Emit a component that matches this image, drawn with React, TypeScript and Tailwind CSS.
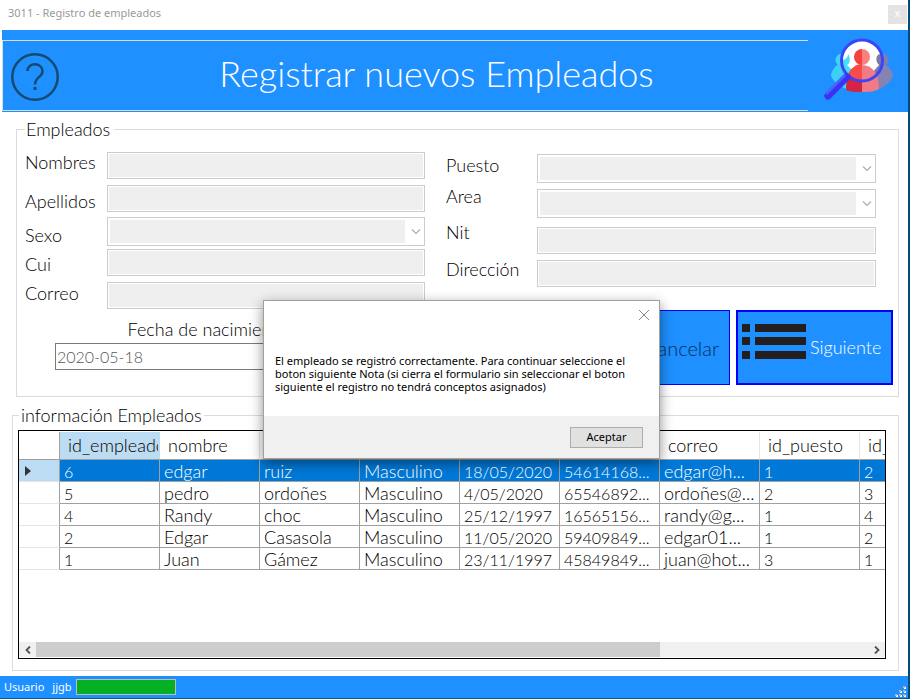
import type { ReactNode } from 'react';

const columns = ['id_empleado', 'nombre', 'apellido', 'sexo', 'fecha_nac', 'cui', 'correo', 'id_puesto', 'id_area'];

const rows = [
  ['6', 'edgar', 'ruiz', 'Masculino', '18/05/2020', '54614168...', 'edgar@h...', '1', '2'],
  ['5', 'pedro', 'ordoñes', 'Masculino', '4/05/2020', '65546892...', 'ordoñes@...', '2', '3'],
  ['4', 'Randy', 'choc', 'Masculino', '25/12/1997', '16565156...', 'randy@g...', '1', '4'],
  ['2', 'Edgar', 'Casasola', 'Masculino', '11/05/2020', '59409849...', 'edgar01...', '1', '2'],
  ['1', 'Juan', 'Gámez', 'Masculino', '23/11/1997', '45849849...', 'juan@hot...', '3', '1'],
];

function TextField({ id }: { id: string }) {
  return (
    <div className="flex h-[27px] border border-[#cccccc] bg-white p-px">
      <input id={id} type="text" disabled className="min-w-0 flex-1 bg-[#efefef] px-1" />
    </div>
  );
}

function SelectField({ id }: { id: string }) {
  return (
    <div className="flex h-[29px] border border-[#cccccc] bg-white p-0.5">
      <select id={id} disabled className="min-w-0 flex-1 appearance-none bg-[#efefef] opacity-100">
        <option></option>
      </select>
      <svg viewBox="0 0 17 23" className="h-[23px] w-[17px] shrink-0" fill="none" stroke="#adadad" strokeWidth="1.2">
        <path d="M7 9.500 L11 13.500 L15 9.500" />
      </svg>
    </div>
  );
}

function Label({ htmlFor, className, children }: { htmlFor: string; className?: string; children: ReactNode }) {
  return (
    <label htmlFor={htmlFor} className={`block leading-5 ${className ?? ''}`}>
      {children}
    </label>
  );
}

function PeopleSearchIcon() {
  return (
    <svg viewBox="0 0 70 64" className="mt-2 mr-3.5 h-16 w-[70px] shrink-0">
      <circle cx="18" cy="22" r="6.500" fill="#3dd5f5" />
      <path d="M13 27 C9 31 7 34 7 38 C10 44 15 48 22 51 L32 51 L32 27 Z" fill="#3dcff5" />
      <circle cx="58" cy="22" r="6.500" fill="#7d7fb4" />
      <path d="M62 27 C67 31 69 34 69 38 C66 45 60 50 53 51 L44 51 L46 27 Z" fill="#8583b3" />
      <circle cx="38" cy="22.500" r="20" fill="#ffffff" />
      <path d="M18 22 C20 22 24 20 24 16 C27 20 26 26 23 27 L31 35 L26 41 C21 36 18 30 18 22 Z" fill="#45e0f8" />
      <path d="M55 16 C51 19 52 24 55 27 L48 35 L52 38 C56 33 59 25 57 17 Z" fill="#7b7ba6" />
      <path d="M38 27 C28 27 22 34 22 52 C27 54 32 54 38 54 Z" fill="#d42442" />
      <path d="M38 27 C48 27 55 35 55 51 C49 54 44 54 38 54 Z" fill="#f37a84" />
      <path d="M38 11 a8 8 0 0 0 0 16 Z" fill="#f6423f" />
      <path d="M38 11 a8 8 0 0 1 0 16 Z" fill="#fa8080" />
      <path d="M38 26 C31 26 27 31 25 36 C28 40 33 42 38 42 Z" fill="#fa4b48" />
      <circle cx="38" cy="22.500" r="20.500" fill="none" stroke="#3c44f6" strokeWidth="3" />
      <path d="M23 39 L4 58" stroke="#3a31f2" strokeWidth="7" strokeLinecap="round" />
      <path d="M21 37 L2 56" stroke="#4862ff" strokeWidth="3" />
    </svg>
  );
}

function ListIcon() {
  return (
    <svg viewBox="0 0 64 36" className="h-9 w-16 shrink-0" fill="#231f20">
      {[0, 13, 27].map((y) => (
        <g key={y}>
          <rect x="0" y={y} width="8" height="8" />
          <rect x="13" y={y} width="51" height="8" />
        </g>
      ))}
    </svg>
  );
}

function MessageDialog() {
  return (
    <div
      role="dialog"
      aria-label="Mensaje"
      className="absolute top-[300px] left-[263px] flex h-[159px] w-[397px] flex-col border border-[#a0a0a0] bg-white font-['Noto_Sans',sans-serif] text-[11px] font-normal shadow-[0_4px_12px_rgba(0,0,0,0.45)]"
    >
      <button type="button" aria-label="Cerrar" className="mt-2 mr-[9px] flex h-3 w-3 shrink-0 self-end">
        <svg viewBox="0 0 12 12" className="h-3 w-3" stroke="#8a8a8a" strokeWidth="1">
          <path d="M1 1 L11 11 M11 1 L1 11" />
        </svg>
      </button>
      <p className="mt-[33px] pl-[11px] leading-[13px] whitespace-nowrap text-black">
        El empleado se registró correctamente. Para continuar seleccione el
        <br />
        boton siguiente Nota (si cierra el formulario sin seleccionar el boton
        <br />
        siguiente el registro no tendrá conceptos asignados)
      </p>
      <div className="mt-auto flex h-[42px] items-center justify-end bg-[#f0f0f0] pr-4">
        <button type="button" className="h-[21px] w-[73px] border border-[#adadad] bg-[#e1e1e1] pb-0.5 leading-none">
          Aceptar
        </button>
      </div>
    </div>
  );
}

export default function App() {
  return (
    <main className="relative min-h-screen border-r-2 border-[#004a73] bg-white font-[Lato,sans-serif] text-lg font-light text-black">
      <div className="flex h-[30px] items-start justify-between pl-2 font-['Noto_Sans',sans-serif] text-[11px] font-normal">
        <h1 className="pt-1 leading-[18px] text-[#999999]">3011 - Registro de empleados</h1>
        <button type="button" className="mt-[5px] mr-px h-[19px] w-[19px] bg-[#e3e3e3] pb-1 leading-none text-white">
          x
        </button>
      </div>

      <header className="ml-0.5 flex h-[82px] justify-between bg-[#1e90ff]">
        <div className="mt-2.5 mr-4 flex h-[71px] flex-1 items-center border-y border-l border-[#dcdcdc] pl-2">
          <svg viewBox="0 0 48 48" className="mt-0.5 h-12 w-12 shrink-0" fill="none" stroke="#144a70" strokeWidth="2.500">
            <circle cx="24" cy="24" r="22.700" />
            <path d="M16.500 18 C16.500 9 31.500 9 31.500 18.500 C31.500 24 24 24 24 31.500" />
            <path d="M24 34 V37" strokeWidth="3" />
          </svg>
          <h2 className="flex-1 pb-1.5 pl-1.5 text-center text-4xl text-white">Registrar nuevos Empleados</h2>
        </div>
        <PeopleSearchIcon />
      </header>

      <form>
        <fieldset className="mt-[7px] mr-[9px] ml-4 min-w-0 border border-[#dcdcdc] pr-[5px] pb-[11px] pl-2">
          <legend className="pr-1 pl-px leading-5">Empleados</legend>
          <div className="grid grid-cols-[400fr_430fr] gap-x-[21px] pt-[13px] pr-[17px]">
            <div className="grid grid-cols-[82px_1fr]">
              <div>
                <Label htmlFor="nombres">Nombres</Label>
                <Label htmlFor="apellidos" className="mt-[19px]">Apellidos</Label>
                <Label htmlFor="sexo" className="mt-3.5">Sexo</Label>
                <Label htmlFor="cui" className="mt-[9px]">Cui</Label>
                <Label htmlFor="correo" className="mt-[9px]">Correo</Label>
              </div>
              <div>
                <TextField id="nombres" />
                <div className="mt-1.5"><TextField id="apellidos" /></div>
                <div className="mt-[5px]"><SelectField id="sexo" /></div>
                <div className="mt-[3px]"><TextField id="cui" /></div>
                <div className="mt-1.5"><TextField id="correo" /></div>
              </div>
            </div>
            <div className="grid grid-cols-[91px_1fr] content-start">
              <div className="pt-[3px]">
                <Label htmlFor="puesto">Puesto</Label>
                <Label htmlFor="area" className="mt-[11px]">Area</Label>
                <Label htmlFor="nit" className="mt-4">Nit</Label>
                <Label htmlFor="direccion" className="mt-[17px]">Dirección</Label>
              </div>
              <div className="pt-0.5">
                <SelectField id="puesto" />
                <div className="mt-1.5"><SelectField id="area" /></div>
                <div className="mt-[9px]"><TextField id="nit" /></div>
                <div className="mt-1.5"><TextField id="direccion" /></div>
              </div>
            </div>
          </div>
          <div className="mt-px flex items-start justify-between">
            <div className="ml-[30px] w-[305px] pt-[9px]">
              <Label htmlFor="fecha" className="text-center">Fecha de nacimiento</Label>
              <input
                id="fecha"
                type="text"
                defaultValue="2020-05-18"
                className="mt-1 block h-[27px] w-full border border-[#7a7a7a] bg-white px-px text-base text-[#555555]"
              />
            </div>
            <div className="flex gap-1.5">
              <button type="button" disabled className="h-[75px] w-[157px] border border-[#0000ff] bg-[#1e90ff] pr-2.5 text-right text-xl text-[#062f5c]">
                Cancelar
              </button>
              <button type="button" className="flex h-[75px] w-[157px] items-center border-2 border-[#0000ff] bg-[#1e90ff] pl-1 text-white">
                <span className="pb-3"><ListIcon /></span>
                <span className="pb-0.5 pl-1">Siguiente</span>
              </button>
            </div>
          </div>
        </fieldset>
      </form>

      <fieldset className="mt-2 mr-[9px] ml-3 min-w-0 border border-[#dcdcdc] pr-3 pb-[11px] pl-[5px]">
        <legend className="ml-px px-0.5 leading-5">información Empleados</legend>
        <div className="mt-[5px] flex h-[229px] flex-col border border-black">
          <div className="min-h-0 flex-1 overflow-hidden pt-px">
            <table className="w-[941px] table-fixed border-separate border-spacing-0 leading-5">
              <thead>
                <tr className="h-7">
                  <th className="w-[41px] border-r border-b border-[#a0a0a0] p-0" aria-label="Fila" />
                  {columns.map((name, i) => (
                    <th
                      key={name}
                      className={`w-[100px] border-b border-[#a0a0a0] p-0 font-light ${i === 0 ? 'bg-[#bcdcf4]' : 'border-r border-r-[#e5e5e5]'}`}
                    >
                      <div className="mr-0.5 overflow-hidden pb-0.5 pl-2 text-left whitespace-nowrap">{name}</div>
                    </th>
                  ))}
                </tr>
              </thead>
              <tbody>
                {rows.map((row, r) => (
                  <tr key={row[0]} className={`h-[22px] ${r === 0 ? 'bg-[#0078d7] text-white' : ''}`}>
                    <th className={`border-r border-b border-r-[#a0a0a0] border-b-[#e5e5e5] p-0 ${r === 0 ? 'bg-[#bcdcf4]' : ''}`}>
                      {r === 0 && (
                        <svg viewBox="0 0 6 10" className="ml-1.5 h-2.5 w-1.5" fill="#333333">
                          <path d="M0 0 L6 5 L0 10 Z" />
                        </svg>
                      )}
                    </th>
                    {row.map((value, c) => (
                      <td key={c} className="border-r border-b border-[#a0a0a0] p-0">
                        <div className={`h-[21px] pl-1 whitespace-nowrap ${/^\d/.test(value) ? 'pt-0.5 text-base leading-[19px]' : 'pt-px'}`}>
                          {value}
                        </div>
                      </td>
                    ))}
                  </tr>
                ))}
              </tbody>
            </table>
          </div>
          <div className="mb-px flex h-[15px] shrink-0 items-stretch bg-[#f0f0f0]">
            <button type="button" aria-label="Desplazar a la izquierda" className="flex w-[17px] items-center justify-center">
              <svg viewBox="0 0 6 8" className="h-2 w-1.5" fill="none" stroke="#505050" strokeWidth="1.800">
                <path d="M5 0.500 L1.500 4 L5 7.500" />
              </svg>
            </button>
            <div className="flex-1">
              <div className="h-full w-3/4 bg-[#cdcdcd]" />
            </div>
            <button type="button" aria-label="Desplazar a la derecha" className="flex w-[17px] items-center justify-center">
              <svg viewBox="0 0 6 8" className="h-2 w-1.5" fill="none" stroke="#505050" strokeWidth="1.800">
                <path d="M1 0.500 L4.500 4 L1 7.500" />
              </svg>
            </button>
          </div>
        </div>
      </fieldset>

      <footer className="mt-[5px] flex h-[23px] items-center border-b border-[#075a96] bg-[#1e90ff] pl-1 font-['Noto_Sans',sans-serif] text-[11px] font-normal text-white">
        <span>Usuario</span>
        <span className="ml-2">jjgb</span>
        <div role="progressbar" aria-label="Progreso" className="ml-1 h-4 w-[100px] border border-[#bcbcbc] bg-[#06b025]" />
        <svg viewBox="0 0 11 11" className="mt-2 mr-0.5 ml-auto h-[11px] w-[11px]">
          {[[8, 0], [4, 4], [8, 4], [0, 8], [4, 8], [8, 8]].map(([x, y]) => (
            <g key={`${x}-${y}`}>
              <rect x={x + 1} y={y + 1} width="2" height="2" fill="#ffffff" />
              <rect x={x} y={y} width="2" height="2" fill="#b8b4a8" />
            </g>
          ))}
        </svg>
      </footer>

      <MessageDialog />
    </main>
  );
}
